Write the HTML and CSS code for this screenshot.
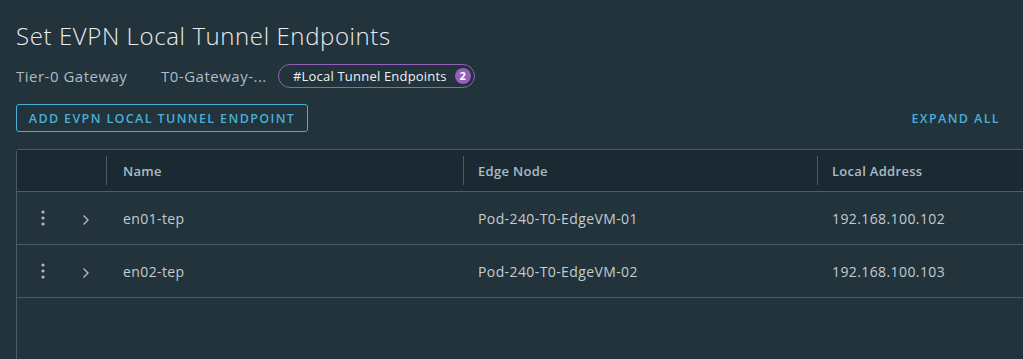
FILE: index.html
```html
<!DOCTYPE html>
<html>

<head>
    <link rel="stylesheet" href="styles.css">
</head>

<body>
    <div class="page">
        <h1 class="title">Set EVPN Local Tunnel Endpoints</h1>
        <div class="meta">
            <span class="meta-label">Tier-0 Gateway</span>
            <span class="meta-value">T0-Gateway-...</span>
            <span class="pill">#Local Tunnel Endpoints <span class="badge">2</span></span>
        </div>
        <div class="actions">
            <button class="btn-outline">ADD EVPN LOCAL TUNNEL ENDPOINT</button>
            <button class="btn-link">EXPAND ALL</button>
        </div>
        <div class="datagrid">
            <div class="dg-row dg-head">
                <div class="dg-cell dg-fixed"></div>
                <div class="dg-cell dg-name"><span class="sep"></span>Name</div>
                <div class="dg-cell"><span class="sep"></span>Edge Node</div>
                <div class="dg-cell"><span class="sep"></span>Local Address</div>
            </div>
            <div class="dg-row">
                <div class="dg-cell dg-fixed">
                    <svg class="kebab" width="4" height="16" viewBox="0 0 4 16"><circle cx="2" cy="2" r="1.6" /><circle cx="2" cy="8" r="1.6" /><circle cx="2" cy="14" r="1.6" /></svg>
                    <svg class="chevron" width="8" height="12" viewBox="0 0 8 12"><path d="M1.5 1.5 L6 6 L1.5 10.5" /></svg>
                </div>
                <div class="dg-cell dg-name">en01-tep</div>
                <div class="dg-cell">Pod-240-T0-EdgeVM-01</div>
                <div class="dg-cell">192.168.100.102</div>
            </div>
            <div class="dg-row">
                <div class="dg-cell dg-fixed">
                    <svg class="kebab" width="4" height="16" viewBox="0 0 4 16"><circle cx="2" cy="2" r="1.6" /><circle cx="2" cy="8" r="1.6" /><circle cx="2" cy="14" r="1.6" /></svg>
                    <svg class="chevron" width="8" height="12" viewBox="0 0 8 12"><path d="M1.5 1.5 L6 6 L1.5 10.5" /></svg>
                </div>
                <div class="dg-cell dg-name">en02-tep</div>
                <div class="dg-cell">Pod-240-T0-EdgeVM-02</div>
                <div class="dg-cell">192.168.100.103</div>
            </div>
            <div class="dg-empty"></div>
        </div>
    </div>
</body>

</html>
```

FILE: styles.css
```css
body {
    margin: 0;
    background: #22333b;
    font-family: 'Open Sans', 'Noto Sans', sans-serif;
    overflow: hidden;
    height: 100vh;
}

.page {
    padding: 18px 0 0 16px;
}

.title {
    margin: 0;
    font-size: 24px;
    line-height: 36px;
    font-weight: 300;
    letter-spacing: 0.6px;
    color: #e9ecef;
}

.meta {
    display: flex;
    align-items: center;
    margin-top: 9px;
    height: 25px;
    font-size: 15px;
    letter-spacing: 0.5px;
    color: #adbbc4;
}

.meta-label {
    width: 145px;
}

.meta-value {
    width: 117px;
}

.pill {
    display: flex;
    align-items: center;
    height: 22px;
    padding: 0 3px 0 14px;
    border: 1px solid #9460b8;
    border-radius: 12px;
    font-size: 13px;
    letter-spacing: 0.2px;
    color: #eef1f3;
}

.badge {
    display: inline-flex;
    justify-content: center;
    align-items: center;
    width: 16px;
    height: 16px;
    margin-left: 8px;
    border-radius: 50%;
    background: #9460b8;
    color: #fff;
    font-size: 11px;
    font-weight: 700;
    letter-spacing: 0;
}

.actions {
    display: flex;
    justify-content: space-between;
    align-items: center;
    margin-top: 16px;
    padding-right: 23px;
}

.btn-outline,
.btn-link {
    font-family: inherit;
    font-size: 12.5px;
    font-weight: 600;
    letter-spacing: 0.11em;
    color: #49afd9;
    background: none;
    cursor: pointer;
}

.btn-outline {
    height: 28px;
    width: 292px;
    padding: 0;
    border: 1px solid #49afd9;
    border-radius: 3px;
}

.btn-link {
    border: none;
    padding: 0;
}

.datagrid {
    margin-top: 17px;
    width: 1200px;
    border: 1px solid #4b5c65;
    border-radius: 3px;
}

.dg-row {
    display: grid;
    grid-template-columns: 89px 357px 354px 1fr;
    height: 52px;
    border-bottom: 1px solid #4b5c65;
    font-size: 14px;
    letter-spacing: 0.4px;
    color: #c3ccd1;
}

.dg-head {
    height: 41px;
    background: #1b2a32;
    font-size: 13px;
    font-weight: 600;
    letter-spacing: 0.3px;
    color: #adbbc4;
}

.dg-cell {
    position: relative;
    display: flex;
    align-items: center;
    padding-left: 15px;
}

.dg-name {
    padding-left: 17px;
}

.dg-fixed {
    padding-left: 24px;
    gap: 37px;
}

.sep {
    position: absolute;
    left: 0;
    top: 6px;
    bottom: 6px;
    width: 1px;
    background: #4b5c65;
}

.kebab {
    fill: #adbbc4;
}

.chevron {
    fill: none;
    stroke: #adbbc4;
    stroke-width: 1.4;
    margin-top: 4px;
}

.dg-empty {
    height: 80px;
}
```
